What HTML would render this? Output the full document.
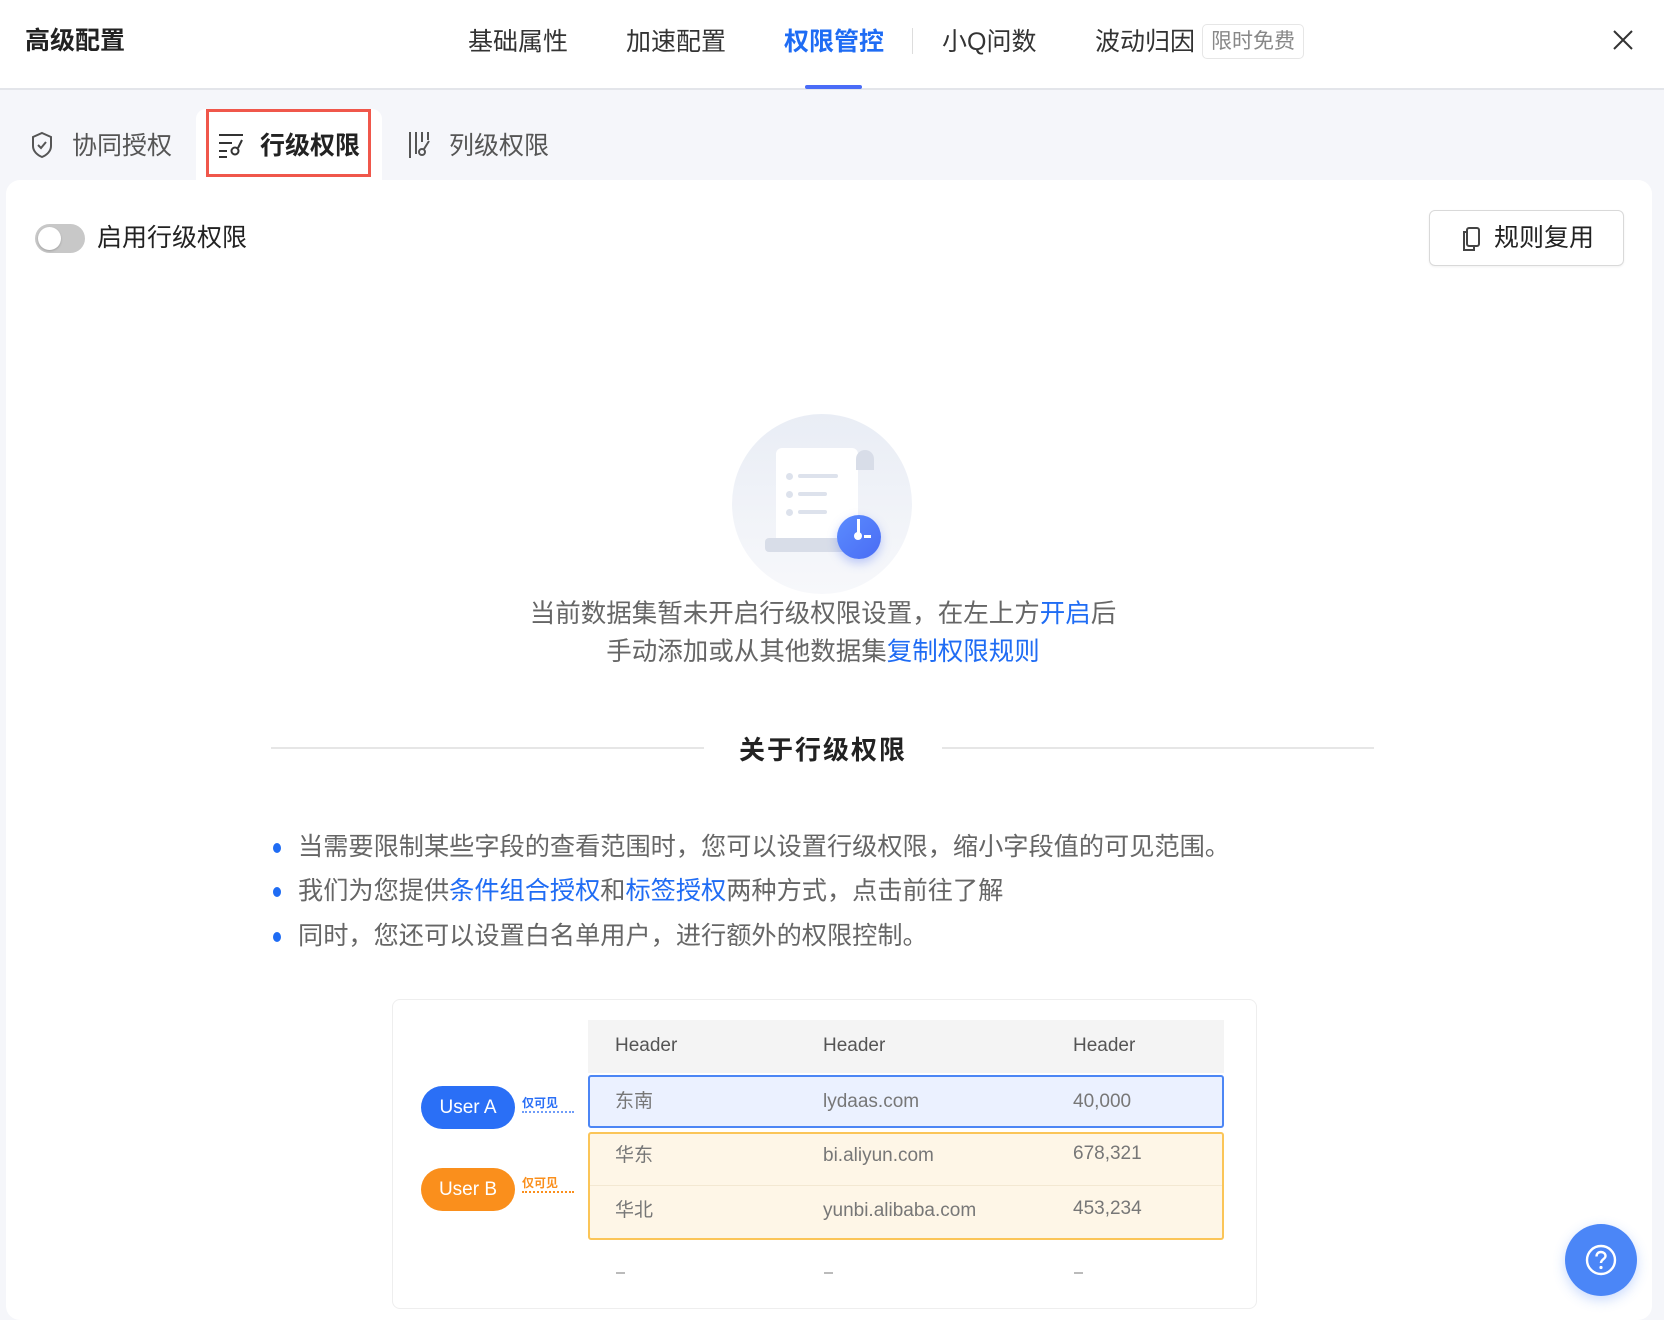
<!DOCTYPE html>
<html><head><meta charset="utf-8"><style>
*{margin:0;padding:0;box-sizing:border-box}
body{width:1664px;height:1310px;overflow:hidden;background:#f5f6fa;font-family:"Liberation Sans","Noto Sans CJK SC",sans-serif;color:#333;position:relative}
.abs{position:absolute;white-space:nowrap}
.top{position:absolute;left:0;top:0;width:1664px;height:90px;background:#fff;border-bottom:2px solid #e3e5ea}
.tt{font-size:25px;color:#333;top:26px;line-height:32px}
.blue{color:#1f6cf4}
.card{position:absolute;left:6px;top:180px;width:1646px;height:1140px;background:#fff;border-radius:14px}
.sub{font-size:25px;top:130px;line-height:32px;color:#555}
</style></head><body>
<div class="top">
 <div class="abs" style="left:25px;top:25px;font-size:25px;font-weight:bold;color:#222;line-height:32px">高级配置</div>
 <div class="abs tt" style="left:468px">基础属性</div>
 <div class="abs tt" style="left:626px">加速配置</div>
 <div class="abs tt blue" style="left:784px;font-weight:bold">权限管控</div>
 <div class="abs" style="left:912px;top:28px;width:1px;height:26px;background:#ddd"></div>
 <div class="abs tt" style="left:942px">小Q问数</div>
 <div class="abs tt" style="left:1095px">波动归因</div>
 <div class="abs" style="left:1202px;top:24px;width:102px;height:35px;border:1px solid #e6e6e6;border-radius:5px;font-size:21px;color:#888;text-align:center;line-height:33px">限时免费</div>
 <svg class="abs" style="left:1612px;top:29px" width="22" height="22" viewBox="0 0 22 22"><path d="M2 2L20 20M20 2L2 20" stroke="#333" stroke-width="2"/></svg>
 <div class="abs" style="left:805px;top:85px;width:57px;height:4px;background:#4a6cf7;border-radius:2px"></div>
</div>
<svg class="abs" style="left:30px;top:131px" width="24" height="28" viewBox="0 0 24 28"><path d="M12 2L21 6V15C21 20 17 24 12 26C7 24 3 20 3 15V6Z" fill="none" stroke="#555" stroke-width="2"/><path d="M8 14L11 17L16 11" fill="none" stroke="#555" stroke-width="2"/></svg>
<div class="abs sub" style="left:72px">协同授权</div>
<div class="abs" style="left:196px;top:109px;width:186px;height:72px;background:#fff;border-radius:10px 10px 0 0"></div>
<div class="abs" style="left:206px;top:109px;width:165px;height:68px;border:3px solid #f0574b"></div>
<svg class="abs" style="left:218px;top:132px" width="28" height="26" viewBox="0 0 28 26"><path d="M1 3H25M1 11H14M1 19H9M1 25H9" stroke="#333" stroke-width="2"/><circle cx="17" cy="19" r="3.5" fill="none" stroke="#333" stroke-width="2"/><path d="M20 16L24 8" stroke="#333" stroke-width="2"/></svg>
<div class="abs sub" style="left:260px;color:#222;font-weight:bold">行级权限</div>
<svg class="abs" style="left:408px;top:130px" width="26" height="30" viewBox="0 0 26 30"><path d="M2 2V28M8 2V24M14 2V12M20 2V10" stroke="#555" stroke-width="2"/><circle cx="14" cy="22" r="3" fill="none" stroke="#555" stroke-width="2"/><path d="M16 19L21 11" stroke="#555" stroke-width="2"/></svg>
<div class="abs sub" style="left:449px">列级权限</div>

<div class="card"></div>
<div class="abs" style="left:35px;top:224px;width:50px;height:29px;border-radius:15px;background:#c8c8c8"></div>
<div class="abs" style="left:38px;top:227px;width:23px;height:23px;border-radius:50%;background:#fff;box-shadow:0 1px 2px rgba(0,0,0,.2)"></div>
<div class="abs" style="left:97px;top:222px;font-size:25px;line-height:32px;color:#222">启用行级权限</div>
<div class="abs" style="left:1429px;top:210px;width:195px;height:56px;border:1px solid #d9d9d9;border-radius:6px;box-shadow:0 1px 2px rgba(0,0,0,.06)"></div>
<svg class="abs" style="left:1460px;top:226px" width="22" height="26" viewBox="0 0 22 26"><rect x="7" y="2" width="12" height="18" rx="2" fill="none" stroke="#444" stroke-width="2"/><path d="M7 6H4V24H14V20" fill="none" stroke="#444" stroke-width="2"/></svg>
<div class="abs" style="left:1494px;top:222px;font-size:25px;line-height:32px;color:#222">规则复用</div>

<div class="abs" style="left:732px;top:414px;width:180px;height:180px;border-radius:50%;background:linear-gradient(#e9edf5,#f7f8fb)"></div>
<div class="abs" style="left:776px;top:448px;width:82px;height:100px;background:#fff;border-radius:6px"></div>
<div class="abs" style="left:856px;top:450px;width:18px;height:20px;background:#d8dde8;border-radius:9px 9px 0 0"></div>
<div class="abs" style="left:765px;top:538px;width:100px;height:14px;background:#d8dde8;border-radius:4px"></div>
<div class="abs" style="left:786px;top:473px;width:7px;height:7px;border-radius:50%;background:#dde2ec"></div>
<div class="abs" style="left:798px;top:474px;width:40px;height:4px;border-radius:2px;background:#dde2ec"></div>
<div class="abs" style="left:786px;top:491px;width:7px;height:7px;border-radius:50%;background:#dde2ec"></div>
<div class="abs" style="left:798px;top:492px;width:29px;height:4px;border-radius:2px;background:#dde2ec"></div>
<div class="abs" style="left:786px;top:509px;width:7px;height:7px;border-radius:50%;background:#dde2ec"></div>
<div class="abs" style="left:798px;top:510px;width:29px;height:4px;border-radius:2px;background:#dde2ec"></div>
<div class="abs" style="left:837px;top:515px;width:44px;height:44px;border-radius:50%;background:linear-gradient(135deg,#5b8cff,#4a6cf4);box-shadow:0 4px 10px rgba(74,108,244,.35)"></div>
<div class="abs" style="left:857px;top:519px;width:3px;height:14px;background:#fff"></div>
<div class="abs" style="left:854px;top:532px;width:8px;height:8px;border-radius:50%;background:#fff"></div>
<div class="abs" style="left:864px;top:535px;width:7px;height:3px;background:#fff"></div>

<div class="abs" style="left:0;width:1646px;top:598px;text-align:center;font-size:25.5px;line-height:32px;color:#666">当前数据集暂未开启行级权限设置，在左上方<span class="blue">开启</span>后</div>
<div class="abs" style="left:0;width:1646px;top:636px;text-align:center;font-size:25.5px;line-height:32px;color:#666">手动添加或从其他数据集<span class="blue">复制权限规则</span></div>

<div class="abs" style="left:271px;top:747px;width:433px;height:2px;background:#e6e6e6"></div>
<div class="abs" style="left:942px;top:747px;width:432px;height:2px;background:#e6e6e6"></div>
<div class="abs" style="left:0;width:1646px;top:733px;text-align:center;font-size:26px;letter-spacing:2px;font-weight:bold;line-height:34px;color:#222">关于行级权限</div>

<div class="abs" style="left:273px;top:843px;width:8px;height:10px;border-radius:50%;background:#1f6cf4"></div>
<div class="abs" style="left:298px;top:830px;font-size:25.2px;line-height:34px;color:#666">当需要限制某些字段的查看范围时，您可以设置行级权限，缩小字段值的可见范围。</div>
<div class="abs" style="left:273px;top:887px;width:8px;height:10px;border-radius:50%;background:#1f6cf4"></div>
<div class="abs" style="left:298px;top:874px;font-size:25.2px;line-height:34px;color:#666">我们为您提供<span class="blue">条件组合授权</span>和<span class="blue">标签授权</span>两种方式，点击前往了解</div>
<div class="abs" style="left:273px;top:932px;width:8px;height:10px;border-radius:50%;background:#1f6cf4"></div>
<div class="abs" style="left:298px;top:919px;font-size:25.2px;line-height:34px;color:#666">同时，您还可以设置白名单用户，进行额外的权限控制。</div>

<div class="abs" style="left:392px;top:999px;width:865px;height:310px;border:1px solid #eee;border-radius:8px;background:#fff"></div>
<div class="abs" style="left:588px;top:1020px;width:636px;height:53px;background:#f4f4f4"></div>
<div class="abs" style="left:588px;top:1075px;width:636px;height:53px;background:#ebf1ff;border:2px solid #4c86f5;border-radius:3px"></div>
<div class="abs" style="left:588px;top:1132px;width:636px;height:108px;background:#fef6e7;border:2px solid #fbc558;border-radius:3px"></div>
<div class="abs" style="left:590px;top:1185px;width:632px;height:1px;background:#f3e8d2"></div>
<div class="abs" style="left:615px;top:1034px;font-size:19px;color:#555;line-height:24px">Header</div>
<div class="abs" style="left:823px;top:1034px;font-size:19px;color:#555;line-height:24px">Header</div>
<div class="abs" style="left:1073px;top:1034px;font-size:19px;color:#555;line-height:24px">Header</div>
<div class="abs" style="left:615px;top:1090px;font-size:19px;color:#777;line-height:24px">东南</div>
<div class="abs" style="left:823px;top:1090px;font-size:19px;color:#777;line-height:24px">lydaas.com</div>
<div class="abs" style="left:1073px;top:1090px;font-size:19px;color:#777;line-height:24px">40,000</div>
<div class="abs" style="left:615px;top:1144px;font-size:19px;color:#777;line-height:24px">华东</div>
<div class="abs" style="left:823px;top:1144px;font-size:19px;color:#777;line-height:24px">bi.aliyun.com</div>
<div class="abs" style="left:1073px;top:1142px;font-size:19px;color:#777;line-height:24px">678,321</div>
<div class="abs" style="left:615px;top:1199px;font-size:19px;color:#777;line-height:24px">华北</div>
<div class="abs" style="left:823px;top:1199px;font-size:19px;color:#777;line-height:24px">yunbi.alibaba.com</div>
<div class="abs" style="left:1073px;top:1197px;font-size:19px;color:#777;line-height:24px">453,234</div>
<div class="abs" style="left:616px;top:1272px;width:9px;height:2px;background:#bbb"></div>
<div class="abs" style="left:824px;top:1272px;width:9px;height:2px;background:#bbb"></div>
<div class="abs" style="left:1074px;top:1272px;width:9px;height:2px;background:#bbb"></div>
<div class="abs" style="left:421px;top:1086px;width:94px;height:43px;border-radius:22px;background:#2a6ff6;color:#fff;font-size:19px;text-align:center;line-height:43px">User A</div>
<div class="abs" style="left:421px;top:1168px;width:94px;height:43px;border-radius:22px;background:#fa8f1c;color:#fff;font-size:19px;text-align:center;line-height:43px">User B</div>
<div class="abs" style="left:522px;top:1094px;font-size:12px;color:#2a6ff6;font-weight:bold">仅可见</div>
<div class="abs" style="left:522px;top:1111px;width:52px;border-top:2px dotted #6f9cf8"></div>
<div class="abs" style="left:522px;top:1174px;font-size:12px;color:#fa8f1c;font-weight:bold">仅可见</div>
<div class="abs" style="left:522px;top:1191px;width:52px;border-top:2px dotted #fa8f1c"></div>

<div class="abs" style="left:1565px;top:1224px;width:72px;height:72px;border-radius:50%;background:#4b86f7;box-shadow:0 4px 12px rgba(75,134,247,.3)"></div>
<svg class="abs" style="left:1584px;top:1243px" width="34" height="34" viewBox="0 0 34 34"><circle cx="17" cy="17" r="14" fill="none" stroke="#fff" stroke-width="2.4"/><path d="M12.5 13.5C12.5 10.5 14.5 9 17 9C19.5 9 21.5 10.7 21.5 13C21.5 16 17 16.5 17 20" fill="none" stroke="#fff" stroke-width="2.4"/><circle cx="17" cy="24.5" r="1.6" fill="#fff"/></svg>
</body></html>
